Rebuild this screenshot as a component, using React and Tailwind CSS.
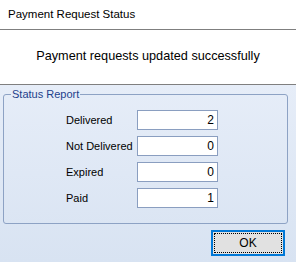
import React from 'react';

const rows = [
    { label: 'Delivered', value: 2 },
    { label: 'Not Delivered', value: 0 },
    { label: 'Expired', value: 0 },
    { label: 'Paid', value: 1 },
];

const App = () => {
    return (
        <div className="w-[296px] h-[262px] flex flex-col bg-white overflow-hidden" style={{ fontFamily: '"Liberation Sans", Arial, sans-serif' }}>
            {/* Title */}
            <div className="h-[30px] shrink-0 flex items-center px-[8px] text-[11.5px] text-black border-b border-[#7f7f7f]">
                Payment Request Status
            </div>

            {/* Message */}
            <div className="h-[55px] shrink-0 flex items-center justify-center text-[12.7px] text-black border-b border-[#7f7f7f]">
                Payment requests updated successfully
            </div>

            {/* Body */}
            <div className="flex-1 flex flex-col bg-gradient-to-b from-[#e6edf8] to-[#d8e3f2] pt-[3px]">
                <fieldset className="ml-[3px] w-[285px] h-[136px] border border-[#8da2c4] rounded-[3px] px-0">
                    <legend className="ml-[7px] px-[1px] text-[11px] leading-[13px] text-[#1d3f8c]">Status Report</legend>
                    <div className="flex flex-col gap-[6px] pt-[9px]">
                        {rows.map(r => (
                            <div key={r.label} className="flex items-center h-[20px]">
                                <span className="ml-[62px] w-[71px] text-[11px] text-black">{r.label}</span>
                                <div className="w-[81px] h-[20px] bg-white border border-[#8a9ec0] flex items-center justify-end pr-[3px] text-[12px] text-black">
                                    {r.value}
                                </div>
                            </div>
                        ))}
                    </div>
                </fieldset>

                <div className="flex justify-end pr-[11px] mt-[6px]">
                    <button className="w-[74px] h-[26px] border-2 border-[#0078d7] bg-[#e1e1e1] p-[1px]">
                        <div className="w-full h-full border border-dotted border-black flex items-center justify-center text-[12px] text-black">
                            OK
                        </div>
                    </button>
                </div>
            </div>
        </div>
    );
};

export default App;
